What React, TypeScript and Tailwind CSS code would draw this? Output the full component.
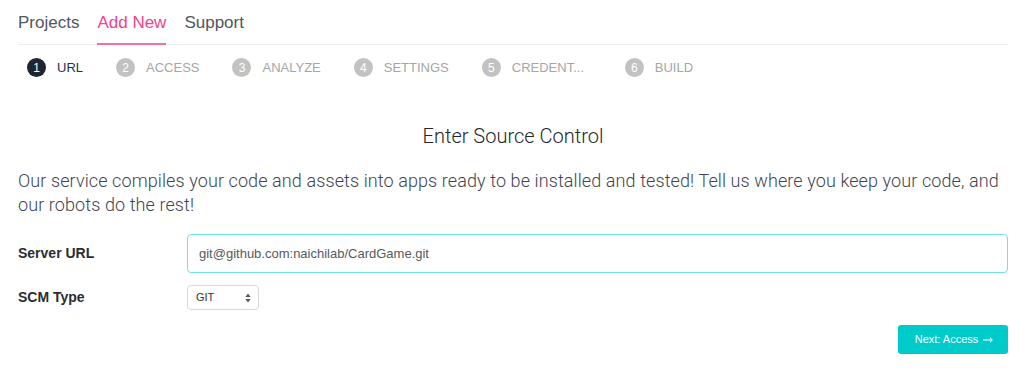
import React from "react";

const steps = [
  { n: 1, label: "URL", active: true },
  { n: 2, label: "ACCESS" },
  { n: 3, label: "ANALYZE" },
  { n: 4, label: "SETTINGS" },
  { n: 5, label: "CREDENT...", wide: true },
  { n: 6, label: "BUILD" },
];

export default function App() {
  return (
    <div className="w-full min-h-[377px] bg-white pl-[18px] pr-[16px] font-['Liberation_Sans',Arial,sans-serif]">
      {/* Top nav */}
      <nav className="flex h-[45px] gap-[18px] border-b border-[#eeeeee] pt-[1px] text-[17px] text-[#51555e]">
        <div className="flex items-center">Projects</div>
        <div className="relative flex items-center text-[#f5428a]">
          Add New
          <span className="absolute left-0 right-0 bottom-[-1px] h-[2px] bg-[#f56fa5]" />
        </div>
        <div className="flex items-center">Support</div>
      </nav>

      {/* Steps */}
      <div className="flex h-[45px] items-center gap-[33px] pl-[9px]">
        {steps.map((s) => (
          <div key={s.n} className="flex items-center gap-[11px]">
            <span
              className={
                "flex h-[19px] w-[19px] items-center justify-center rounded-full text-[12px] text-white " +
                (s.active ? "bg-[#1e2631]" : "bg-[#c2c2c2]")
              }
            >
              {s.n}
            </span>
            <span
              className={
                "text-[13px] " +
                (s.wide ? "w-[80px] " : "") +
                (s.active ? "text-[#2b313b]" : "text-[#a6a6a6]")
              }
            >
              {s.label}
            </span>
          </div>
        ))}
      </div>

      {/* Title */}
      <h1 className="mt-[32px] text-center font-['Roboto',sans-serif] text-[20px] font-light leading-[28px] text-[#23262b]">
        Enter Source Control
      </h1>

      <p className="mt-[19px] font-['Roboto',sans-serif] text-[18px] font-light leading-[24px] tracking-[0.1px] text-[#3f4450]">
        Our service compiles your code and assets into apps ready to be installed and tested! Tell us where you keep your code, and our robots do the rest!
      </p>

      {/* Form */}
      <div className="mt-[17px] flex items-center">
        <label className="w-[169px] text-[14px] font-bold text-[#2a2d33]">Server URL</label>
        <div className="flex h-[39px] flex-1 items-center rounded-[4px] border border-[#6fe2e2] px-[11px] text-[13px] text-[#555a61]">
          git@github.com:naichilab/CardGame.git
        </div>
      </div>

      <div className="mt-[12px] flex items-center">
        <label className="w-[169px] text-[14px] font-bold text-[#2a2d33]">SCM Type</label>
        <div className="flex h-[25px] w-[72px] items-center justify-between rounded-[4px] border border-[#d9d9d9] bg-white pl-[8px] pr-[7px] text-[11px] text-[#333]">
          <span>GIT</span>
          <svg width="6" height="10" viewBox="0 0 6 10" fill="#555">
            <path d="M3 0.5 L5.6 4 H0.4 Z" />
            <path d="M3 9.5 L5.6 6 H0.4 Z" />
          </svg>
        </div>
      </div>

      <div className="mt-[15px] flex justify-end">
        <button className="flex h-[29px] w-[110px] items-center justify-center gap-[5px] rounded-[3px] bg-[#00cbcb] pl-[2px] text-[11px] text-white">
          <span>Next: Access</span>
          <svg width="10" height="6" viewBox="0 0 10 6" fill="none" stroke="white" strokeWidth="1">
            <path d="M0 3 H9.3" />
            <path d="M7 0.8 L9.3 3 L7 5.2" />
          </svg>
        </button>
      </div>
    </div>
  );
}
